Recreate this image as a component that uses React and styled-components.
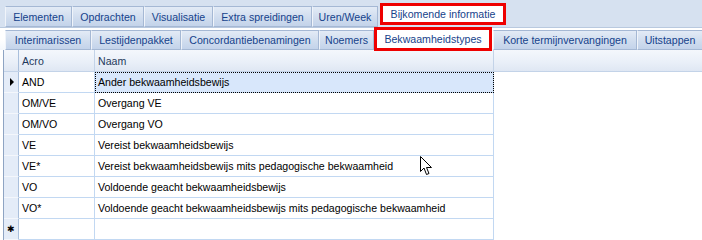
import React from "react";
import styled, { createGlobalStyle, css } from "styled-components";

const GlobalStyle = createGlobalStyle`
	html, body {
		margin: 0;
		padding: 0;
		background: #ffffff;
	}
	body {
		font-family: "Liberation Sans", Arial, sans-serif;
		font-size: 10.6px;
		width: 702px;
		height: 240px;
		overflow: hidden;
	}
`;

const mainTabs = [
	{ label: "Elementen", width: 67 },
	{ label: "Opdrachten", width: 72 },
	{ label: "Visualisatie", width: 69 },
	{ label: "Extra spreidingen", width: 99 },
	{ label: "Uren/Week", width: 66 },
	{ label: "Bijkomende informatie", width: 120, active: true },
];

const subTabs = [
	{ label: "Interimarissen", width: 86 },
	{ label: "Lestijdenpakket", width: 90 },
	{ label: "Concordantiebenamingen", width: 138 },
	{ label: "Noemers", width: 55 },
	{ label: "Bekwaamheidstypes", width: 112, active: true },
	{ label: "Korte termijnvervangingen", width: 144 },
	{ label: "Uitstappen", width: 66 },
];

const rows = [
	["AND", "Ander bekwaamheidsbewijs"],
	["OM/VE", "Overgang VE"],
	["OM/VO", "Overgang VO"],
	["VE", "Vereist bekwaamheidsbewijs"],
	["VE*", "Vereist bekwaamheidsbewijs mits pedagogische bekwaamheid"],
	["VO", "Voldoende geacht bekwaamheidsbewijs"],
	["VO*", "Voldoende geacht bekwaamheidsbewijs mits pedagogische bekwaamheid"],
];

// styled components
const Page = styled.div`
	position: relative;
	width: 702px;
	height: 240px;
	background: #ffffff;
	overflow: hidden;
`;

const TopBar = styled.div`
	display: flex;
	align-items: flex-end;
	height: 28px;
	padding-left: 5px;
	box-sizing: border-box;
	background: #d6e1f0;
	border-bottom: 1px solid #b9c9df;
`;

const SubBar = styled.div`
	display: flex;
	align-items: flex-end;
	height: 22px;
	padding-left: 5px;
	box-sizing: border-box;
	background: linear-gradient(#ffffff, #ffffff 50%, #f3f7fc);
`;

const Tab = styled.div`
	flex: none;
	width: ${(p) => p.$w}px;
	height: ${(p) => p.$h}px;
	box-sizing: border-box;
	display: flex;
	align-items: center;
	justify-content: center;
	white-space: nowrap;
	color: #15428b;
	background: linear-gradient(#e3ebf6, #d2deef 50%, #c3d3ea);
	border: 1px solid #a5b8d4;
	border-left-color: #f0f4fa;
	${(p) =>
		p.$active &&
		css`
			position: relative;
			align-self: flex-start;
			background: #ffffff;
			border-color: #ffffff;
			height: ${p.$activeH}px;
			margin: ${p.$activeTop}px ${p.$mr}px 0 ${p.$ml}px;
			outline: 3px solid #ee0000;
			z-index: 2;
		`}
`;

const Grid = styled.div`
	display: flex;
	flex-direction: column;
	border-left: 1px solid #8ea4c3;
	margin-left: 3px;
`;

const HeaderRow = styled.div`
	display: flex;
	height: 22px;
	box-sizing: border-box;
	background: linear-gradient(#f4f7fc, #e9eff8 60%, #dfe7f3);
	border-bottom: 1px solid #c3d3e8;
`;

const Row = styled.div`
	display: flex;
	height: 21px;
	box-sizing: border-box;
`;

const Selector = styled.div`
	flex: none;
	width: 15px;
	box-sizing: border-box;
	display: flex;
	align-items: center;
	justify-content: center;
	background: ${(p) => (p.$header ? "transparent" : "#e4ecf8")};
	border-right: 1px solid #a9bfdc;
	border-bottom: ${(p) => (p.$header ? "none" : "1px solid #f4f7fc")};
	font-size: 9px;
	color: #000000;
`;

const Cell = styled.div`
	flex: none;
	width: ${(p) => p.$w}px;
	box-sizing: border-box;
	display: flex;
	align-items: center;
	padding-left: 3px;
	white-space: nowrap;
	overflow: hidden;
	color: ${(p) => (p.$header ? "#1e395b" : "#000000")};
	border-right: 1px solid ${(p) => (p.$header ? "#c3d3e8" : "#c2d8f2")};
	border-bottom: ${(p) => (p.$header ? "none" : "1px solid #c2d8f2")};
	${(p) =>
		p.$focused &&
		css`
			background: #d8e7fb;
			outline: 1px dotted #000000;
			outline-offset: -1px;
		`}
`;

const Arrow = styled.span`
	display: block;
	width: 0;
	height: 0;
	border-top: 4px solid transparent;
	border-bottom: 4px solid transparent;
	border-left: 4px solid #000000;
	margin-left: 2px;
`;

const Filler = styled.div`
	flex: 1;
`;

const Cursor = styled.svg`
	position: absolute;
	left: 420px;
	top: 156px;
	width: 13px;
	height: 20px;
	z-index: 5;
`;

export default function App() {
	return (
		<Page>
			<GlobalStyle />
			<TopBar>
				{mainTabs.map((t) => (
					<Tab
						key={t.label}
						$w={t.width}
						$h={21}
						$active={t.active}
						$activeH={16}
						$activeTop={6}
						$ml={5}
						$mr={0}
					>
						{t.label}
					</Tab>
				))}
			</TopBar>
			<SubBar>
				{subTabs.map((t) => (
					<Tab
						key={t.label}
						$w={t.width}
						$h={20}
						$active={t.active}
						$activeH={18}
						$activeTop={2}
						$ml={3}
						$mr={4}
					>
						{t.label}
					</Tab>
				))}
			</SubBar>
			<Grid>
				<HeaderRow>
					<Selector $header />
					<Cell $header $w={76}>Acro</Cell>
					<Cell $header $w={399}>Naam</Cell>
					<Filler />
				</HeaderRow>
				{rows.map(([acro, naam], i) => (
					<Row key={acro}>
						<Selector>{i === 0 && <Arrow />}</Selector>
						<Cell $w={76}>{acro}</Cell>
						<Cell $w={399} $focused={i === 0}>
							{naam}
						</Cell>
					</Row>
				))}
				<Row>
					<Selector>✱</Selector>
					<Cell $w={76} />
					<Cell $w={399} />
				</Row>
			</Grid>
			<Cursor viewBox="0 0 13 20">
				<path d="M0.5 0.5 L0.5 15.5 L4 12 L6.5 18.5 L9 17.5 L6.5 11.5 L11.5 11.5 Z" fill="#ffffff" stroke="#000000" strokeWidth="1" strokeLinejoin="miter" />
			</Cursor>
		</Page>
	);
}
